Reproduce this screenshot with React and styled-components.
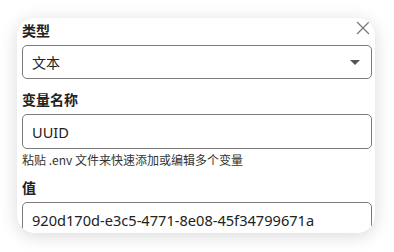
import React from 'react';
import styled, { createGlobalStyle } from 'styled-components';

const GlobalStyle = createGlobalStyle`
  html, body {
    margin: 0;
    padding: 0;
    background: #ffffff;
  }
  body {
    font-family: "Noto Sans", "Noto Sans CJK SC", sans-serif;
  }
`;

const Page = styled.div`
  width: 394px;
  height: 252px;
  padding: 18px 19px 19px 17px;
  box-sizing: border-box;
`;

const Card = styled.div`
  position: relative;
  width: 358px;
  height: 215px;
  background: #fff;
  border-radius: 18px;
  box-shadow: 0 3px 18px rgba(0, 0, 0, 0.15);
  overflow: hidden;
  padding: 2px 3px 0 5px;
  box-sizing: border-box;
`;

const Close = styled.button`
  position: absolute;
  top: 2px;
  right: 4px;
  width: 16px;
  height: 16px;
  padding: 0;
  border: none;
  background: transparent;
  display: flex;
  align-items: center;
  justify-content: center;
`;

const Field = styled.div`
  display: flex;
  flex-direction: column;
  margin-bottom: ${(p) => p.$gap || 10}px;
`;

const Label = styled.label`
  font-family: "Noto Sans CJK SC", sans-serif;
  font-size: 14px;
  font-weight: 700;
  line-height: 20px;
  color: #222;
  margin-bottom: 5px;
`;

const Box = styled.div`
  height: ${(p) => p.$h || 34}px;
  box-sizing: border-box;
  border: 1px solid #7a7a7a;
  border-radius: 5px;
  display: flex;
  align-items: center;
  justify-content: space-between;
  padding: 0 11px 0 9px;
  font-size: 14.6px;
  color: #222;
  font-family: "Noto Sans", "Noto Sans CJK SC", sans-serif;
`;

const Help = styled.div`
  font-family: "Noto Sans CJK SC", sans-serif;
  font-size: 12px;
  line-height: 16px;
  color: #333;
  margin-top: 3px;
`;

const Caret = styled.span`
  width: 0;
  height: 0;
  border-left: 5px solid transparent;
  border-right: 5px solid transparent;
  border-top: 5px solid #555;
`;

export default function App() {
  return (
    <>
      <GlobalStyle />
      <Page>
        <Card>
          <Close aria-label="关闭">
            <svg width="14" height="14" viewBox="0 0 14 14">
              <path d="M1 1L13 13M13 1L1 13" stroke="#777" strokeWidth="1.2" />
            </svg>
          </Close>
          <Field>
            <Label>类型</Label>
            <Box>
              <span style={{ fontFamily: '"Noto Sans CJK SC", sans-serif', fontSize: '14px' }}>文本</span>
              <Caret />
            </Box>
          </Field>
          <Field $gap={9}>
            <Label>变量名称</Label>
            <Box $h={35}>UUID</Box>
            <Help>粘贴 .env 文件来快速添加或编辑多个变量</Help>
          </Field>
          <Field>
            <Label>值</Label>
            <Box $h={36}>920d170d-e3c5-4771-8e08-45f34799671a</Box>
          </Field>
        </Card>
      </Page>
    </>
  );
}
